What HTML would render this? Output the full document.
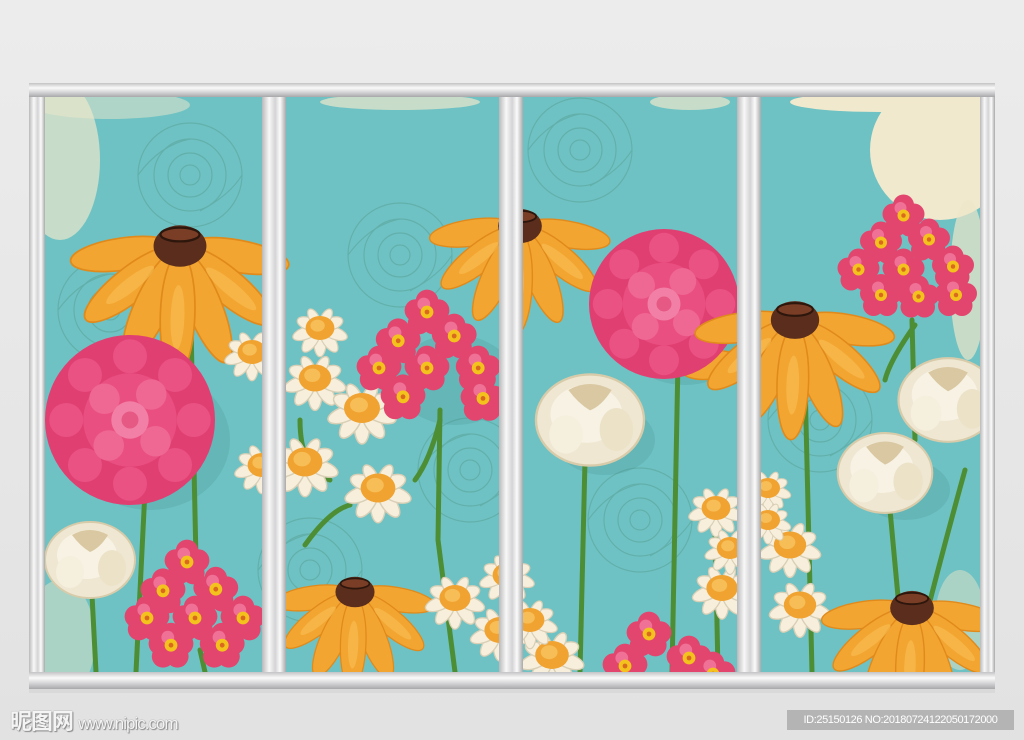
<!DOCTYPE html>
<html><head><meta charset="utf-8"><style>
html,body{margin:0;padding:0;width:1024px;height:740px;overflow:hidden;background:#e4e4e4;}
svg{display:block;position:absolute;left:0;top:0}
.wm{position:absolute;left:10px;top:704px;font:bold 22px "Liberation Sans","Noto Sans CJK SC",sans-serif;color:#f4f4f4;text-shadow:0 0 1px #777,1px 1px 1px #888;letter-spacing:-1px}
.wm span{font:17px "Liberation Sans",sans-serif;letter-spacing:-1px}
.id{position:absolute;left:787px;top:710px;width:227px;height:20px;background:#b4b4b4;color:#fff;font:11px "Liberation Sans",sans-serif;line-height:20px;text-align:center;letter-spacing:-0.4px}
</style></head><body>
<svg width="1024" height="740" viewBox="0 0 1024 740" xmlns="http://www.w3.org/2000/svg">
<defs>
<clipPath id="pc"><rect x="44" y="96" width="938" height="577"/></clipPath>
<linearGradient id="bg" x1="0" y1="0" x2="0" y2="1"><stop offset="0" stop-color="#ececec"/><stop offset="1" stop-color="#e2e2e2"/></linearGradient>
<linearGradient id="pv" x1="0" y1="0" x2="1" y2="0"><stop offset="0" stop-color="#b9b9bb"/><stop offset=".3" stop-color="#f8f8f8"/><stop offset=".55" stop-color="#d4d4d6"/><stop offset=".75" stop-color="#fbfbfb"/><stop offset="1" stop-color="#a9a9ab"/></linearGradient>
<linearGradient id="ph" x1="0" y1="0" x2="0" y2="1"><stop offset="0" stop-color="#c3c3c5"/><stop offset=".35" stop-color="#fafafa"/><stop offset=".65" stop-color="#d6d6d8"/><stop offset="1" stop-color="#a8a8aa"/></linearGradient>
<g id="orange">
 <g fill="#f3a531" stroke="#e08a1c" stroke-width="1.5">
  <ellipse cx="0" cy="50" rx="14" ry="46" transform="rotate(82)"/>
  <ellipse cx="0" cy="50" rx="14" ry="46" transform="rotate(-80)"/>
  <ellipse cx="0" cy="54" rx="15" ry="50" transform="rotate(52)"/>
  <ellipse cx="0" cy="54" rx="15" ry="50" transform="rotate(-50)"/>
  <ellipse cx="0" cy="57" rx="15" ry="52" transform="rotate(25)"/>
  <ellipse cx="0" cy="57" rx="15" ry="52" transform="rotate(-22)"/>
  <ellipse cx="0" cy="60" rx="15" ry="54" transform="rotate(2)"/>
 </g>
 <g fill="#f8bd4f" opacity=".7">
  <ellipse cx="0" cy="62" rx="6" ry="28" transform="rotate(2)"/>
  <ellipse cx="0" cy="58" rx="6" ry="28" transform="rotate(-50)"/>
  <ellipse cx="0" cy="55" rx="6" ry="26" transform="rotate(52)"/>
 </g>
 <ellipse cx="0" cy="0" rx="23" ry="18" fill="#5b2d1c"/>
 <ellipse cx="0" cy="-10" rx="17" ry="6" fill="#7a3e26" stroke="#2d160c" stroke-width="2"/>
</g>
<g id="dahlia">
 <circle r="1" fill="#e03f72"/>
 <g fill="#ea5585" opacity=".9">
  <circle cx="0" cy="-.75" r=".2"/><circle cx=".53" cy="-.53" r=".2"/><circle cx=".75" cy="0" r=".2"/><circle cx=".53" cy=".53" r=".2"/><circle cx="0" cy=".75" r=".2"/><circle cx="-.53" cy=".53" r=".2"/><circle cx="-.75" cy="0" r=".2"/><circle cx="-.53" cy="-.53" r=".2"/>
 </g>
 <circle r=".55" fill="#e94f80"/>
 <g fill="#ef6793"><circle cx=".25" cy="-.3" r=".18"/><circle cx="-.3" cy="-.25" r=".18"/><circle cx="-.25" cy=".3" r=".18"/><circle cx=".3" cy=".25" r=".18"/></g>
 <circle r=".22" fill="#f280a6"/><circle r=".1" fill="#e55984"/>
</g>
<g id="daisy">
 <g fill="#f7efdc" stroke="#d9cfb6" stroke-width="1">
  <ellipse cx="0" cy="13" rx="5" ry="11"/><ellipse cx="0" cy="13" rx="5" ry="11" transform="rotate(35)"/><ellipse cx="0" cy="13" rx="5" ry="11" transform="rotate(-35)"/><ellipse cx="0" cy="13" rx="5" ry="11" transform="rotate(70)"/><ellipse cx="0" cy="13" rx="5" ry="11" transform="rotate(-70)"/><ellipse cx="0" cy="11" rx="5" ry="9" transform="rotate(110)"/><ellipse cx="0" cy="11" rx="5" ry="9" transform="rotate(-110)"/><ellipse cx="0" cy="10" rx="4" ry="8" transform="rotate(150)"/><ellipse cx="0" cy="10" rx="4" ry="8" transform="rotate(-150)"/>
 </g>
 <ellipse rx="12" ry="10" fill="#f0a330"/><ellipse cx="-2" cy="-2" rx="6" ry="5" fill="#f7bd56"/>
</g>
<g id="blossom">
 <g fill="#e2466f"><circle cx="0" cy="-7" r="7"/><circle cx="7" cy="-1" r="7"/><circle cx="4" cy="7" r="7"/><circle cx="-5" cy="7" r="7"/><circle cx="-7" cy="-1" r="7"/></g>
 <circle cx="-2" cy="-5" r="4" fill="#f07196"/>
 <circle r="4" fill="#f4c21d"/><circle r="1.5" fill="#d9691f"/>
</g>
<g id="peony">
 <ellipse rx="45" ry="38" fill="#efe7d2" stroke="#d8cbaa" stroke-width="2"/>
 <ellipse cx="-3" cy="-5" rx="30" ry="24" fill="#f7f2e4"/>
 <path d="M-18,-25 Q0,-35 18,-25 Q10,-12 0,-8 Q-10,-14 -18,-25Z" fill="#d9c8a1"/>
 <ellipse cx="-20" cy="12" rx="14" ry="16" fill="#f5efde"/>
 <ellipse cx="22" cy="8" rx="14" ry="18" fill="#ece2c8"/>
</g>
<g id="rose" fill="none" stroke="#5aa59c" stroke-width="1.2" opacity=".6">
 <circle r="10"/><circle r="22"/><circle r="36"/><circle r="52"/><path d="M-52,0 Q-30,-30 0,-36 M10,36 Q40,20 52,0"/>
</g>
</defs>
<rect width="1024" height="740" fill="url(#bg)"/>
<rect x="29" y="688" width="966" height="5" fill="#d9d9d9"/>
<g clip-path="url(#pc)">
<rect x="44" y="96" width="938" height="577" fill="#6fc2c3"/>
<g>
 <ellipse cx="60" cy="160" rx="40" ry="80" fill="#ede7cc" opacity=".7"/>
 <ellipse cx="110" cy="105" rx="80" ry="14" fill="#ede7cc" opacity=".5"/>
 <ellipse cx="60" cy="640" rx="35" ry="60" fill="#e5e4c8" opacity=".5"/>
 <ellipse cx="940" cy="150" rx="70" ry="70" fill="#f0e9cd"/>
 <ellipse cx="880" cy="102" rx="90" ry="10" fill="#f0e9cd"/>
 <ellipse cx="968" cy="280" rx="18" ry="80" fill="#eee6c9" opacity=".7"/>
 <ellipse cx="960" cy="620" rx="25" ry="50" fill="#e8e4c8" opacity=".5"/>
 <ellipse cx="400" cy="102" rx="80" ry="8" fill="#ede7cc" opacity=".7"/>
 <ellipse cx="690" cy="102" rx="40" ry="8" fill="#ede7cc" opacity=".7"/>
</g>
<use href="#rose" x="190" y="175"/><use href="#rose" x="400" y="255"/><use href="#rose" x="580" y="150"/>
<use href="#rose" x="820" y="420"/><use href="#rose" x="470" y="470"/><use href="#rose" x="110" y="310"/><use href="#rose" x="640" y="520"/><use href="#rose" x="310" y="570"/>
<g fill="#3f8d8f" opacity=".22">
 <ellipse cx="150" cy="440" rx="80" ry="70"/><ellipse cx="685" cy="325" rx="70" ry="60"/><ellipse cx="455" cy="380" rx="60" ry="45"/><ellipse cx="605" cy="440" rx="50" ry="35"/><ellipse cx="905" cy="490" rx="45" ry="30"/>
</g>
<g stroke="#4d8e34" stroke-width="5" fill="none" stroke-linecap="round">
 <path d="M190,280 L196,560"/><path d="M145,490 L136,672"/><path d="M92,595 L96,672"/><path d="M200,650 L205,672"/>
 <path d="M440,410 L438,540 L455,672"/><path d="M440,420 Q430,460 415,480"/><path d="M300,420 Q300,470 330,480"/><path d="M305,545 Q330,510 350,505"/>
 <path d="M678,360 L672,672"/><path d="M585,460 L580,672"/><path d="M715,525 L718,672"/>
 <path d="M805,380 L812,672"/><path d="M912,320 L915,440"/><path d="M915,325 Q890,360 885,380"/><path d="M890,510 L905,672"/><path d="M965,470 Q940,560 915,660"/><path d="M355,600 L352,672"/>
</g>
<!-- panel 1 -->
<use href="#orange" transform="translate(180,246) scale(1.15)"/>
<use href="#dahlia" transform="translate(130,420) scale(85)"/>
<use href="#peony" x="90" y="560"/>
<g transform="translate(195,610) scale(1.6) translate(-195,-610)">
<use href="#blossom" x="190" y="580"/><use href="#blossom" x="175" y="598"/><use href="#blossom" x="208" y="597"/><use href="#blossom" x="165" y="615"/><use href="#blossom" x="195" y="615"/><use href="#blossom" x="225" y="615"/><use href="#blossom" x="180" y="632"/><use href="#blossom" x="212" y="632"/>
</g>
<use href="#daisy" transform="translate(252,352) scale(1.2)"/><use href="#daisy" transform="translate(262,465) scale(1.2)"/>
<!-- panel 2 -->
<use href="#daisy" transform="translate(320,328) scale(1.2)"/><use href="#daisy" transform="translate(315,378) scale(1.35)"/><use href="#daisy" transform="translate(362,408) scale(1.5)"/><use href="#daisy" transform="translate(305,462) scale(1.45)"/><use href="#daisy" transform="translate(378,488) scale(1.45)"/>
<g transform="translate(435,360) scale(1.6) translate(-435,-360)">
<use href="#blossom" x="430" y="330"/><use href="#blossom" x="412" y="348"/><use href="#blossom" x="447" y="345"/><use href="#blossom" x="400" y="365"/><use href="#blossom" x="430" y="365"/><use href="#blossom" x="462" y="365"/><use href="#blossom" x="415" y="383"/><use href="#blossom" x="465" y="384"/>
</g>
<use href="#orange" transform="translate(520,226) scale(.95)"/>
<use href="#orange" transform="translate(355,592) scale(.85)"/>
<use href="#daisy" transform="translate(455,598) scale(1.3)"/><use href="#daisy" transform="translate(500,630) scale(1.3)"/><use href="#daisy" transform="translate(507,575) scale(1.2)"/>
<!-- panel 3 -->
<ellipse cx="710" cy="365" rx="30" ry="14" fill="#f3a531" stroke="#e08a1c" stroke-width="1.5" transform="rotate(-8 710 365)"/>
<use href="#dahlia" transform="translate(664,304) scale(75)"/>
<use href="#peony" transform="translate(590,420) scale(1.2)"/>
<use href="#daisy" transform="translate(552,655) scale(1.4)"/><use href="#daisy" transform="translate(530,620) scale(1.2)"/>
<g transform="translate(665,650) scale(1.6) translate(-665,-650)">
<use href="#blossom" x="655" y="640"/><use href="#blossom" x="640" y="660"/><use href="#blossom" x="680" y="655"/><use href="#blossom" x="695" y="665"/>
</g>
<use href="#daisy" transform="translate(716,508) scale(1.2)"/><use href="#daisy" transform="translate(722,588) scale(1.3)"/><use href="#daisy" transform="translate(730,548) scale(1.1)"/>
<!-- panel 4 -->
<g transform="translate(908,265) scale(1.5) translate(-908,-265)">
<use href="#blossom" x="905" y="232"/><use href="#blossom" x="890" y="250"/><use href="#blossom" x="922" y="248"/><use href="#blossom" x="875" y="268"/><use href="#blossom" x="905" y="268"/><use href="#blossom" x="938" y="266"/><use href="#blossom" x="890" y="285"/><use href="#blossom" x="940" y="285"/><use href="#blossom" x="915" y="286"/>
</g>
<use href="#orange" transform="translate(795,320) scale(1.05)"/>
<use href="#peony" transform="translate(948,400) scale(1.1)"/>
<use href="#peony" transform="translate(885,473) scale(1.05)"/>
<use href="#daisy" transform="translate(790,545) scale(1.35)"/><use href="#daisy" transform="translate(800,605) scale(1.35)"/><use href="#daisy" transform="translate(768,488) scale(1)"/><use href="#daisy" transform="translate(768,520) scale(1)"/>
<use href="#orange" transform="translate(912,608) scale(.95)"/>
</g>
<!-- frame -->
<rect x="29" y="83" width="966" height="14" fill="url(#ph)"/>
<rect x="29" y="672" width="966" height="17" fill="url(#ph)"/>
<rect x="29" y="97" width="16" height="575" fill="url(#pv)"/>
<rect x="262" y="97" width="24" height="575" fill="url(#pv)"/>
<rect x="499" y="97" width="24" height="575" fill="url(#pv)"/>
<rect x="737" y="97" width="24" height="575" fill="url(#pv)"/>
<rect x="980" y="97" width="15" height="575" fill="url(#pv)"/>
</svg>
<div class="wm">昵图网 <span>www.nipic.com</span></div>
<div class="id">ID:25150126 NO:20180724122050172000</div>
</body></html>
